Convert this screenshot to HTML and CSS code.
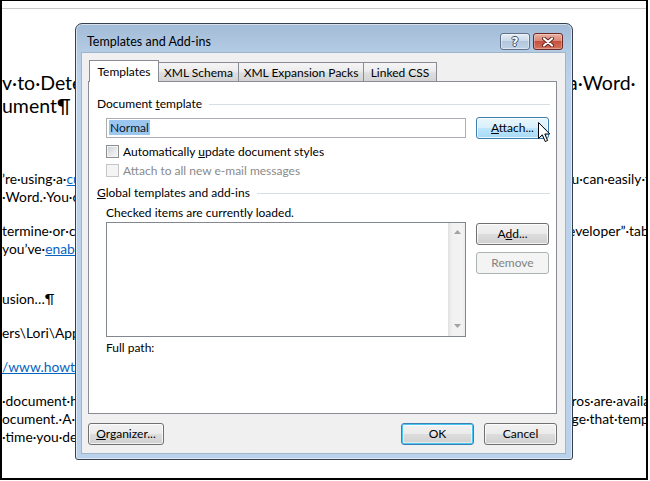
FILE: index.html
```html
<!DOCTYPE html>
<html>
<head>
<meta charset="utf-8">
<title>Templates and Add-ins</title>
<link rel="stylesheet" href="styles.css">
</head>
<body>
<div class="screen">
  <div class="doc">
    <div class="page-edge"></div>
    <div class="heading">
      <div class="line"><span class="l">v·to·Determine·the·Template</span><span class="r">a·Word·</span></div>
      <div class="line"><span class="l">ument¶</span><span class="r"></span></div>
    </div>
    <div class="para first">
      <div class="line"><span class="l">’re·using·a·<span class="link">custom·template</span></span><span class="r">·u·can·easily·find·out</span></div>
      <div class="line"><span class="l">·Word.·You·can·also</span><span class="r"></span></div>
    </div>
    <div class="para">
      <div class="line"><span class="l">termine·or·change·the</span><span class="r">eveloper”·tab·is</span></div>
      <div class="line"><span class="l">you’ve·<span class="link">enabled·the</span></span><span class="r"></span></div>
    </div>
    <div class="para">
      <div class="line"><span class="l"></span><span class="r"></span></div>
    </div>
    <div class="para">
      <div class="line"><span class="l">usion…¶</span><span class="r"></span></div>
    </div>
    <div class="para">
      <div class="line"><span class="l">ers\Lori\AppData\Roaming</span><span class="r"></span></div>
    </div>
    <div class="para">
      <div class="line"><span class="l"><span class="link">/www.howtogeek.com</span></span><span class="r"></span></div>
    </div>
    <div class="para">
      <div class="line"><span class="l">·document·has·macros</span><span class="r">·ros·are·available</span></div>
      <div class="line"><span class="l">ocument.·A·change</span><span class="r">·ge·that·template</span></div>
      <div class="line"><span class="l">·time·you·decide</span><span class="r"></span></div>
    </div>
  </div>

  <div class="dialog">
    <div class="titlebar">
      <span class="title">Templates and Add-ins</span>
      <div class="caption">
        <div class="cbtn help">?</div>
        <div class="cbtn close">
          <svg width="14" height="10" viewBox="0 0 14 10">
            <path d="M3 1.5 L11 8.5 M11 1.5 L3 8.5" stroke="#5b2219" stroke-width="4" stroke-linecap="round" fill="none"/>
            <path d="M3 1.5 L11 8.5 M11 1.5 L3 8.5" stroke="#ffffff" stroke-width="2.2" stroke-linecap="round" fill="none"/>
          </svg>
        </div>
      </div>
    </div>
    <div class="client">
      <div class="tabs">
        <div class="tab active tab-templates">Templates</div>
        <div class="tab tab-schema">XML Schema</div>
        <div class="tab tab-packs">XML Expansion Packs</div>
        <div class="tab tab-css">Linked CSS</div>
      </div>
      <div class="panel">
        <div class="group"><span>Document <u>t</u>emplate</span><i class="rule"></i></div>
        <div class="attach-row indent">
          <div class="textbox"><span class="sel">Normal</span></div>
          <div class="btn hot"><span><u>A</u>ttach...</span></div>
        </div>
        <div class="check check-first indent"><span class="box"></span><span>Automatically <u>u</u>pdate document styles</span></div>
        <div class="check check-second disabled indent"><span class="box"></span><span>Attach to all new e-mail messages</span></div>
        <div class="group group-second"><span><u>G</u>lobal templates and add-ins</span><i class="rule"></i></div>
        <div class="note indent">Checked items are currently loaded.</div>
        <div class="list-row indent">
          <div class="listbox">
            <div class="scrollbar">
              <svg width="7" height="4" viewBox="0 0 7 4"><polygon points="3.5,0 7,4 0,4" fill="#a3a3a3"/></svg>
              <svg width="7" height="4" viewBox="0 0 7 4"><polygon points="0,0 7,0 3.5,4" fill="#a3a3a3"/></svg>
            </div>
          </div>
          <div class="side-btns">
            <div class="btn"><span>A<u>d</u>d...</span></div>
            <div class="btn disabled"><span>Remove</span></div>
          </div>
        </div>
        <div class="note fullpath indent">Full path:</div>
      </div>
      <div class="footer">
        <div class="btn wide"><span><u>O</u>rganizer...</span></div>
        <span class="spacer"></span>
        <div class="btn default"><span>OK</span></div>
        <div class="btn"><span>Cancel</span></div>
      </div>
    </div>
  </div>

  <svg class="cursor" width="13" height="21" viewBox="0 0 13 21">
    <path d="M0.5 0.5 L0.5 16.5 L4.3 12.8 L7.2 19.5 L9.6 18.5 L6.8 12 L11.8 12 Z" fill="#ffffff" stroke="#000000" stroke-width="1" stroke-linejoin="miter"/>
  </svg>
</div>
</body>
</html>
```

FILE: styles.css
```css
* { box-sizing: border-box; }

html, body {
  margin: 0;
  padding: 0;
  background: #ffffff;
}

body {
  width: 650px;
  height: 481px;
  overflow: hidden;
}

.screen {
  position: relative;
  width: 648px;
  height: 480px;
  border-top: 1px solid #000;
  border-left: 2px solid #000;
  border-right: 2px solid #000;
  border-bottom: 2px solid #000;
  overflow: hidden;
  background: #fff;
  font-family: Lato, "Liberation Sans", sans-serif;
}

/* ---------- Word document behind the dialog ---------- */
.doc { color: #000; }

.page-edge {
  height: 8px;
  border-bottom: 1px solid #c9c9c9;
}

.line {
  display: grid;
  grid-template-columns: 566px 1fr;
  white-space: nowrap;
}

.line .l, .line .r { overflow: hidden; }

.heading {
  margin-top: 62px;
  font-size: 19.5px;
  line-height: 23px;
}

.para {
  margin-top: 16px;
  font-size: 13.8px;
  line-height: 18px;
}

.para.first { margin-top: 53px; }

.link {
  color: #0563c1;
  text-decoration: underline;
}

/* ---------- Dialog window ---------- */
.dialog {
  position: absolute;
  left: 73px;
  top: 22px;
  width: 498px;
  height: 437px;
  border: 1px solid #34404d;
  border-radius: 7px 7px 3px 3px;
  background: linear-gradient(#a2bbd6 0px, #b4cbe4 28px, #bcd3eb 60px, #b9d1ea 100%);
  box-shadow: inset 0 0 0 1px rgba(255, 255, 255, 0.55);
  padding: 0 7px 6px 6px;
  display: flex;
  flex-direction: column;
  font-family: Lato, "Liberation Sans", sans-serif;
  font-size: 12px;
  color: #000;
}

.titlebar {
  height: 29px;
  display: flex;
  align-items: flex-start;
}

.title {
  margin-top: 10px;
  padding-left: 5px;
  line-height: 16px;
  font-size: 12.5px;
}

.caption {
  margin-left: auto;
  margin-top: 9px;
  margin-right: 2px;
  display: flex;
  gap: 3px;
}

.cbtn {
  width: 30px;
  height: 17px;
  border-radius: 3px;
  display: flex;
  align-items: center;
  justify-content: center;
}

.cbtn.help {
  border: 1px solid #5f7289;
  background: linear-gradient(#e6eef6 0%, #cbd9e9 45%, #b2c6dd 50%, #bfd2e7 100%);
  box-shadow: inset 0 0 0 1px rgba(255, 255, 255, 0.45);
  color: #ffffff;
  font-family: "DejaVu Sans", sans-serif;
  font-weight: bold;
  font-size: 12px;
  line-height: 14px;
  text-shadow: 1px 0 0 #3f4f63, -1px 0 0 #3f4f63, 0 1px 0 #3f4f63, 0 -1px 0 #3f4f63;
}

.cbtn.close {
  border: 1px solid #6d2a22;
  background: linear-gradient(#eab0a4 0%, #d98878 45%, #c74f3e 50%, #d2735f 100%);
  box-shadow: inset 0 0 0 1px rgba(255, 255, 255, 0.3);
}

.client {
  height: 400px;
  background: #f0f0f0;
  box-shadow: 0 0 0 1px #9fb4cd;
  padding: 7px 8px 8px 6px;
  display: flex;
  flex-direction: column;
}

/* tabs */
.tabs {
  display: flex;
  align-items: flex-end;
  height: 22px;
  margin-bottom: -1px;
  padding-left: 1px;
}

.tab {
  height: 19px;
  margin-bottom: 1px;
  margin-left: -1px;
  border: 1px solid #898c95;
  border-bottom: none;
  background: linear-gradient(#f5f5f5 0%, #ececec 45%, #dedede 55%, #d3d3d3 100%);
  display: flex;
  align-items: center;
  justify-content: center;
  padding-top: 1px;
  line-height: 16px;
  white-space: nowrap;
}

.tab:first-child { margin-left: 0; }

.tab.active {
  position: relative;
  z-index: 2;
  height: 22px;
  margin-bottom: 0;
  background: #ffffff;
  padding-top: 1px;
}

.tab-templates { width: 70px; }
.tab-schema { width: 81px; }
.tab-packs { width: 126px; }
.tab-css { width: 74px; }

.panel {
  flex: 1;
  background: #ffffff;
  border: 1px solid #898c95;
  padding: 14px 7px 0 8px;
  display: flex;
  flex-direction: column;
}

.group {
  display: flex;
  align-items: center;
  line-height: 16px;
  white-space: nowrap;
}

.group .rule {
  flex: 1;
  height: 1px;
  background: #d5dfe5;
  margin-left: 7px;
  margin-right: -1px;
}

.group-second { margin-top: 6px; }

.indent { margin-left: 9px; }

.attach-row {
  display: flex;
  align-items: center;
  gap: 10px;
  height: 22px;
  margin-top: 5px;
}

.textbox {
  width: 360px;
  height: 20px;
  border: 1px solid #abadb3;
  background: #fff;
  padding: 1px 2px;
  line-height: 16px;
}

.sel {
  background: #9ac6ef;
  color: #0b1730;
  padding: 0 1px;
}

/* buttons */
.btn {
  width: 73px;
  height: 22px;
  border: 1px solid #707070;
  border-radius: 3px;
  background: linear-gradient(#f2f2f2 0%, #ebebeb 48%, #dddddd 52%, #cfcfcf 100%);
  box-shadow: inset 0 0 0 1px rgba(255, 255, 255, 0.75);
  display: flex;
  align-items: center;
  justify-content: center;
  line-height: 16px;
  white-space: nowrap;
  flex-shrink: 0;
}

.btn.hot {
  border-color: #3c7fb1;
  background: linear-gradient(#eaf6fd 0%, #d9f0fc 48%, #bee6fd 52%, #a7d9f5 100%);
}

.btn.default {
  border-color: #3c7fb1;
  box-shadow: inset 0 0 0 1px #48c6f4, inset 0 0 0 2px rgba(255, 255, 255, 0.5);
}

.btn.disabled {
  border-color: #adb2b5;
  background: #f4f4f4;
  box-shadow: none;
  color: #838383;
}

.btn.wide { width: 76px; }

/* checkboxes */
.check {
  display: flex;
  align-items: center;
  gap: 4px;
  height: 18px;
  white-space: nowrap;
}

.check-first { margin-top: 3px; }
.check-second { margin-top: 1px; }

.check .box {
  width: 13px;
  height: 13px;
  border: 1px solid #8e8f8f;
  background: linear-gradient(135deg, #c9ced4 0%, #e6e8ea 55%, #f7f7f7 100%);
  box-shadow: inset 0 0 0 1px #f4f4f4;
  flex-shrink: 0;
}

.check.disabled { color: #8a8a8a; }

.check.disabled .box {
  border-color: #c6c6c6;
  background: #f4f4f4;
  box-shadow: none;
}

.note {
  margin-top: 4px;
  line-height: 16px;
}

.fullpath { margin-top: 3px; }

/* list */
.list-row {
  display: flex;
  align-items: flex-start;
  gap: 10px;
  margin-top: 1px;
}

.listbox {
  width: 360px;
  height: 115px;
  border: 1px solid #828790;
  background: #fff;
  display: flex;
  justify-content: flex-end;
}

.scrollbar {
  width: 17px;
  height: 100%;
  background: linear-gradient(90deg, #e6e6e6 0%, #f1f1f1 20%, #f3f3f3 80%, #ececec 100%);
  border-left: 1px solid #e2e2e2;
  display: flex;
  flex-direction: column;
  align-items: center;
  justify-content: space-between;
  padding: 7px 0 8px 1px;
}

.side-btns {
  display: flex;
  flex-direction: column;
  gap: 7px;
  padding-top: 1px;
}

/* footer */
.footer {
  display: flex;
  gap: 10px;
  height: 22px;
  margin-top: 9px;
}

.spacer { flex: 1; }

/* pointer */
.cursor {
  position: absolute;
  left: 536px;
  top: 121px;
}
```
